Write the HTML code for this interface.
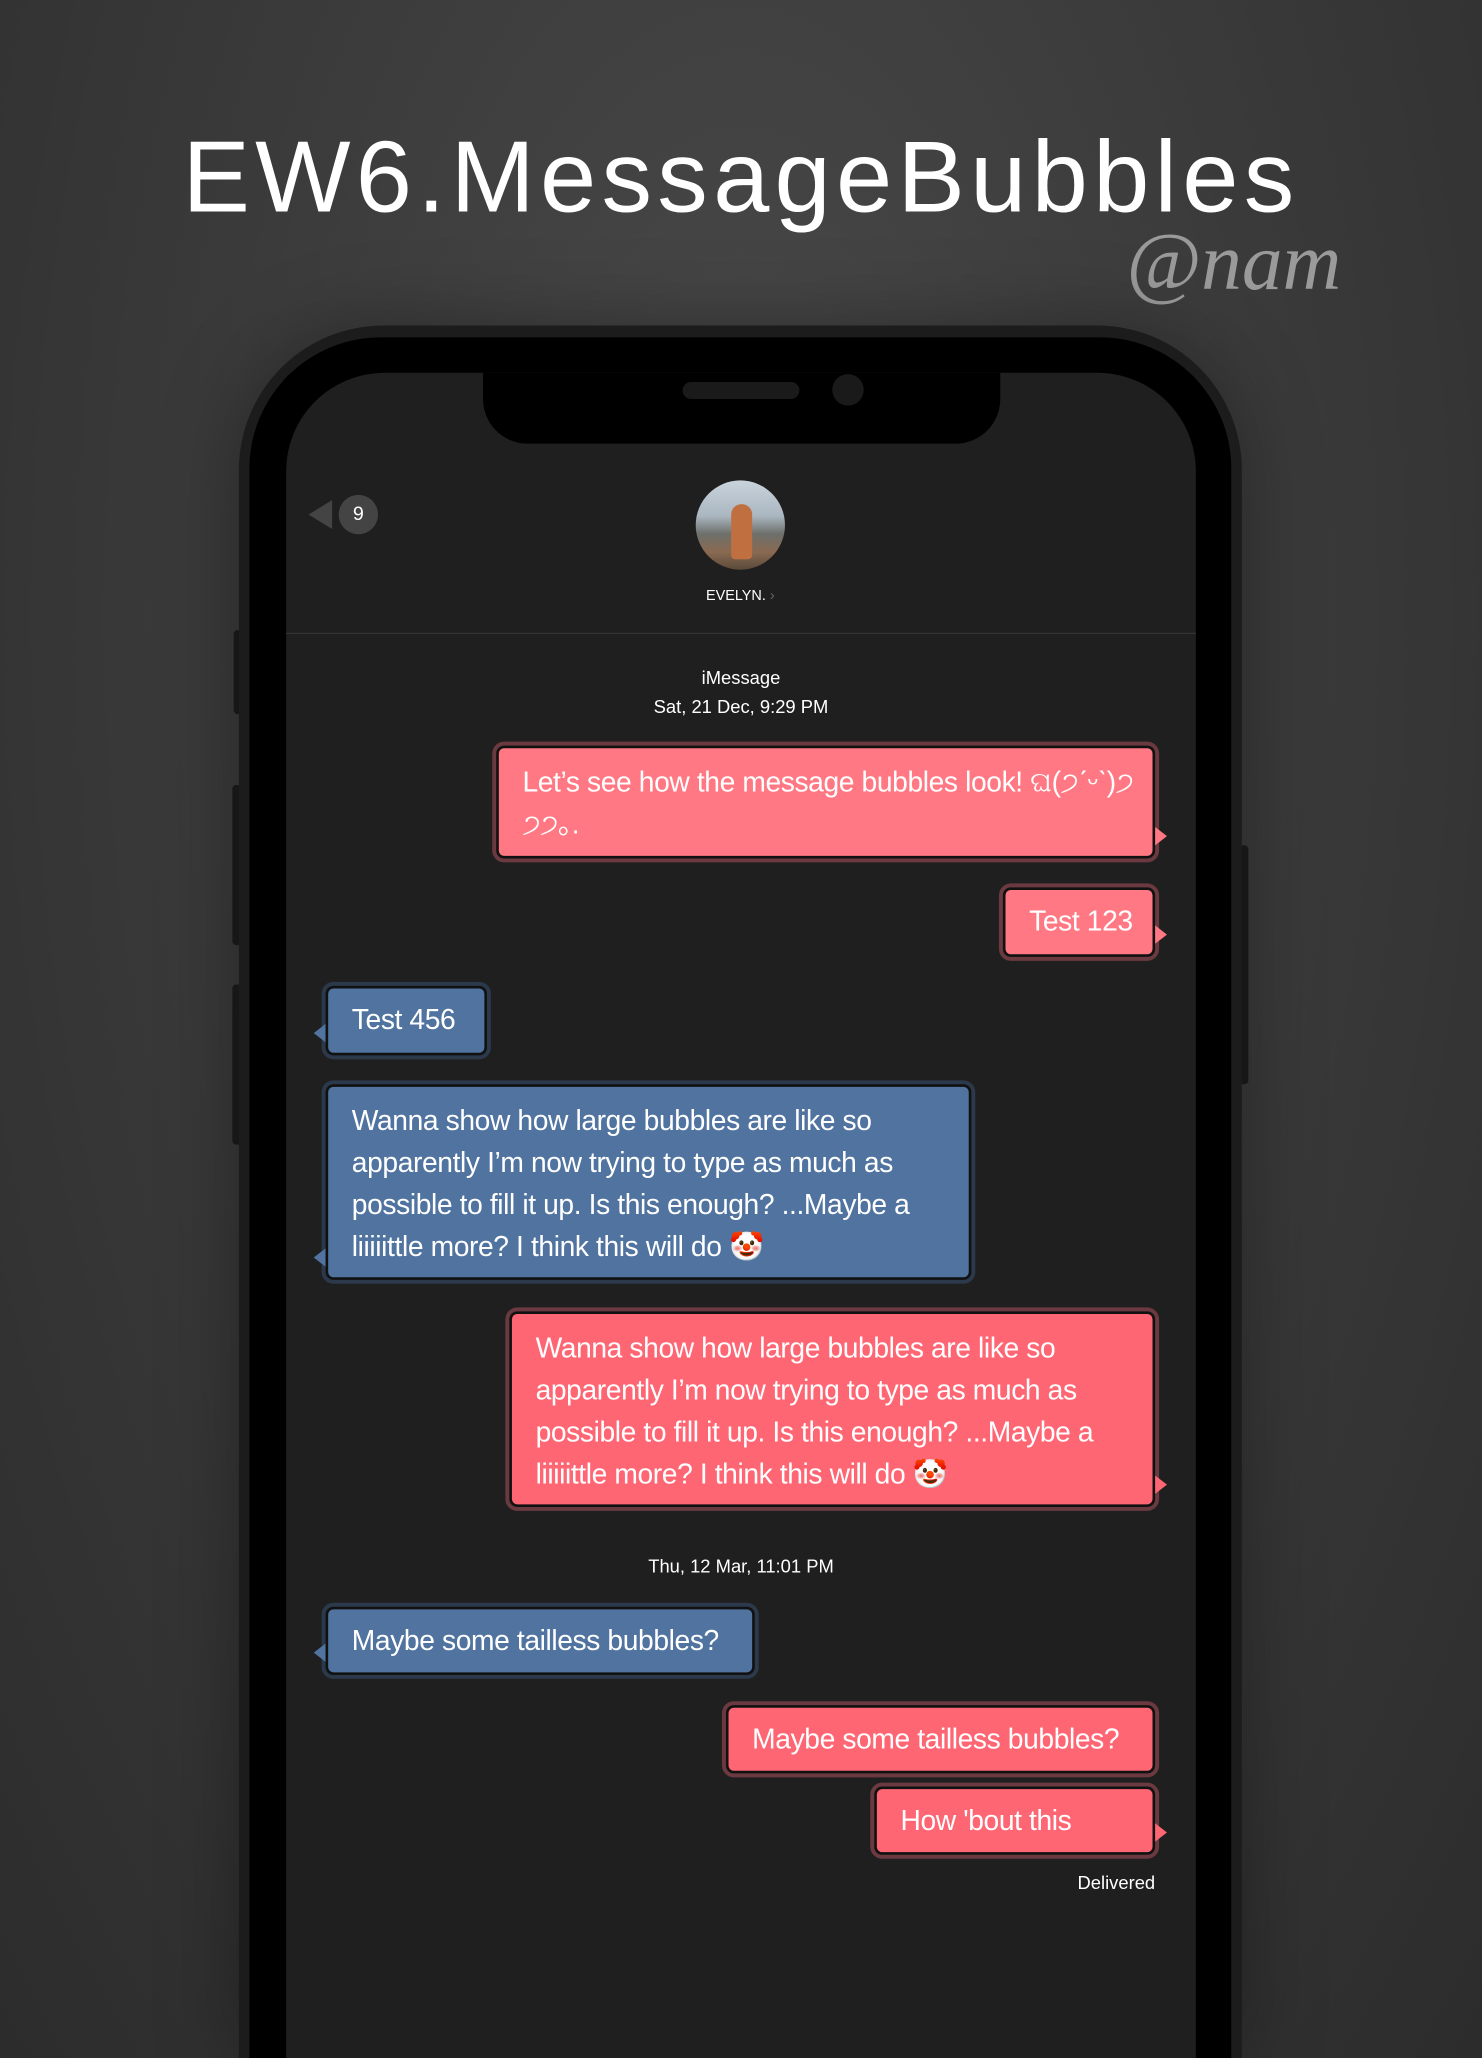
<!DOCTYPE html>
<html><head><meta charset="utf-8"><style>
html,body{margin:0;padding:0;width:1482px;height:2058px;overflow:hidden;background:#333;}
body{font-family:"Liberation Sans","Noto Sans CJK JP",sans-serif;position:relative;}
#w{position:absolute;left:0;top:0;width:1129px;height:1568px;overflow:hidden;transform:scale(1.31267);transform-origin:0 0;background:radial-gradient(ellipse at 50% 30%,#4a4a4a 0%,#3c3c3c 45%,#2c2c2c 100%);}
.a{position:absolute;}
.title{left:0;width:1129px;top:90px;text-align:center;color:#fff;font-size:77px;letter-spacing:4px;font-weight:normal;line-height:90px;}
.sig{left:858px;top:165px;color:#9a9a9a;font-family:"Liberation Serif",serif;font-style:italic;font-size:62px;letter-spacing:0px;}
.body{left:182px;top:248px;width:764px;height:1320px;border-radius:110px 110px 0 0;background:#1c1c1c;box-shadow:0 0 60px rgba(0,0,0,.35);}
.bez{left:190px;top:257px;width:748px;height:1311px;border-radius:100px 100px 0 0;background:#000;}
.scr{left:218px;top:284px;width:693px;height:1284px;border-radius:75px 75px 0 0;background:#1f1f1f;}
.notch{left:368px;top:284px;width:394px;height:54px;background:#000;border-radius:0 0 34px 34px;}
.spk{left:520px;top:291px;width:89px;height:13px;border-radius:7px;background:#1a1a1a;}
.cam{left:634px;top:285px;width:24px;height:24px;border-radius:50%;background:#1a1a1a;}
.btn{background:#1c1c1c;}
.av{left:530px;top:366px;width:68px;height:68px;border-radius:50%;background:linear-gradient(180deg,#c9d3dc 0%,#aab6c0 40%,#6d6f6b 60%,#8a6a52 80%,#5a4a3a 100%);overflow:hidden;}
.av i{position:absolute;left:27px;top:18px;width:16px;height:42px;background:#c07040;border-radius:8px 8px 3px 3px;}
.name{left:500px;width:128px;top:448px;text-align:center;color:#fff;font-size:11px;}
.hr{left:218px;top:482px;width:693px;height:1px;background:#333;}
.cnt{left:258px;top:377px;width:30px;height:30px;border-radius:50%;background:#444;color:#fff;font-size:15px;text-align:center;line-height:30px;}
.back{left:235px;top:381px;width:0;height:0;border-top:11px solid transparent;border-bottom:11px solid transparent;border-right:18px solid #444;}
.ts{left:218px;width:693px;text-align:center;color:#fff;font-size:14px;line-height:22px;}
.b{position:absolute;box-sizing:border-box;border:2px solid #111;border-radius:6px;color:#fff;font-size:21.5px;line-height:32px;padding:8px 18px;white-space:nowrap;letter-spacing:-0.3px;}
.p{background:#ff6674;box-shadow:0 0 0 3px #6a3a40;}
.p1{background:#ff7883;}
.bl{background:#5073a0;box-shadow:0 0 0 3px #2b394b;}
.tr::after,.tl::after{content:"";position:absolute;bottom:8px;width:0;height:0;border-top:7px solid transparent;border-bottom:7px solid transparent;}
.tr::after{right:-11px;border-left:9px solid #ff6674;}
.p1.tr::after{border-left-color:#ff7883;}
.tl::after{left:-11px;border-right:9px solid #5073a0;}
</style></head><body><div id="w">
<div class="a title">EW6.MessageBubbles</div>
<div class="a sig">@nam</div>
<div class="a btn" style="left:178px;top:480px;width:6px;height:64px;border-radius:3px"></div>
<div class="a btn" style="left:177px;top:598px;width:7px;height:122px;border-radius:3px"></div>
<div class="a btn" style="left:177px;top:750px;width:7px;height:122px;border-radius:3px"></div>
<div class="a btn" style="left:944px;top:644px;width:7px;height:182px;border-radius:3px"></div>
<div class="a body"></div>
<div class="a bez"></div>
<div class="a scr"></div>
<div class="a notch"></div>
<div class="a spk"></div>
<div class="a cam"></div>
<div class="a back"></div>
<div class="a cnt">9</div>
<div class="a av"><i></i></div>
<div class="a name">EVELYN. <span style="color:#666">&#x203A;</span></div>
<div class="a hr"></div>
<div class="a ts" style="top:505px">iMessage<br>Sat, 21 Dec, 9:29 PM</div>

<div class="b p p1 tr" style="left:378px;top:568px;width:502px;height:86px;padding-top:10px;line-height:32px">Let’s see how the message bubbles look! ଘ(੭ˊᵕˋ)੭<br>੭੭｡.</div>
<div class="b p p1 tr" style="left:764px;top:676px;width:116px;height:53px;padding-top:8px">Test 123</div>
<div class="b bl tl" style="left:248px;top:751px;width:123px;height:53px;padding-top:8px">Test 456</div>
<div class="b bl tl" style="left:248px;top:826px;width:492px;height:149px;padding-top:10px">Wanna show how large bubbles are like so<br>apparently I’m now trying to type as much as<br>possible to fill it up. Is this enough? ...Maybe a<br>liiiiittle more? I think this will do 🤡</div>
<div class="b p tr" style="left:388px;top:999px;width:492px;height:149px;padding-top:10px">Wanna show how large bubbles are like so<br>apparently I’m now trying to type as much as<br>possible to fill it up. Is this enough? ...Maybe a<br>liiiiittle more? I think this will do 🤡</div>
<div class="a ts" style="top:1182px">Thu, 12 Mar, 11:01 PM</div>
<div class="b bl tl" style="left:248px;top:1224px;width:327px;height:52px;padding-top:8px">Maybe some tailless bubbles?</div>
<div class="b p" style="left:553px;top:1299px;width:327px;height:52px;padding-top:8px">Maybe some tailless bubbles?</div>
<div class="b p tr" style="left:666px;top:1361px;width:214px;height:52px;padding-top:8px">How 'bout this</div>
<div class="a" style="left:780px;width:100px;top:1426px;text-align:right;color:#fff;font-size:14px">Delivered</div>
</div></body></html>
